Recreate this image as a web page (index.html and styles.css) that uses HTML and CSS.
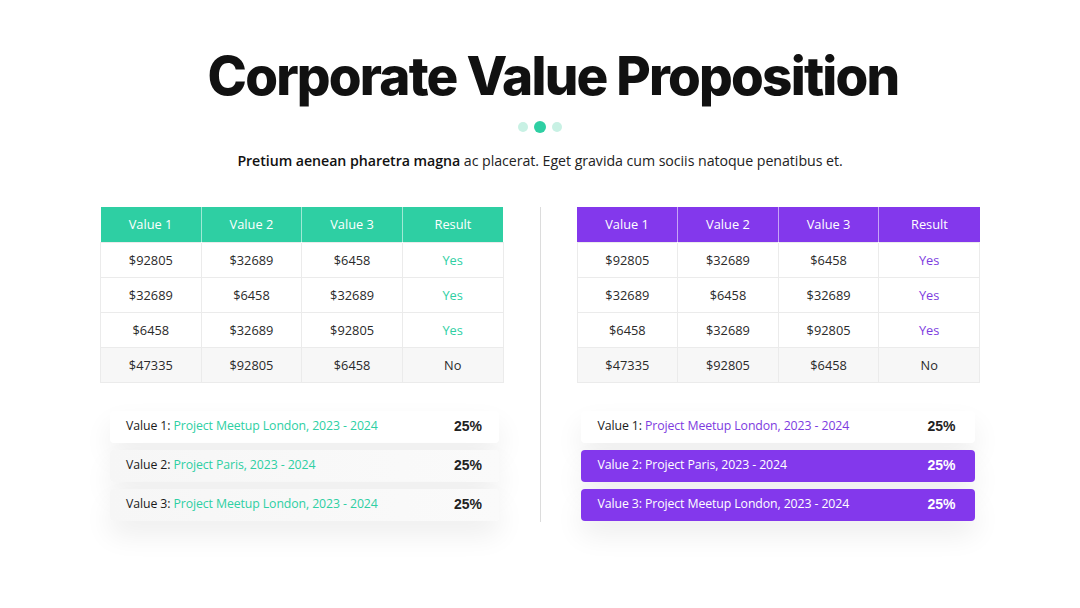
FILE: index.html
```html
<!DOCTYPE html>
<html>
<head>
<meta charset="utf-8">
<link rel="stylesheet" href="styles.css">
</head>
<body>
<div class="slide">
  <h1 class="title">Corporate Value Proposition</h1>
  <div class="dots"><span class="dot"></span><span class="dot active"></span><span class="dot"></span></div>
  <p class="subtitle"><strong>Pretium aenean pharetra magna</strong> ac placerat. Eget gravida cum sociis natoque penatibus et.</p>

  <div class="columns">
    <div class="col teal">
      <table class="data">
        <thead><tr><th>Value 1</th><th>Value 2</th><th>Value 3</th><th>Result</th></tr></thead>
        <tbody>
          <tr><td>$92805</td><td>$32689</td><td>$6458</td><td class="yes">Yes</td></tr>
          <tr><td>$32689</td><td>$6458</td><td>$32689</td><td class="yes">Yes</td></tr>
          <tr><td>$6458</td><td>$32689</td><td>$92805</td><td class="yes">Yes</td></tr>
          <tr class="last"><td>$47335</td><td>$92805</td><td>$6458</td><td>No</td></tr>
        </tbody>
      </table>
      <div class="bars bars-left">
        <div class="bar bar-white"><span class="label">Value 1: <span class="accent">Project Meetup London, 2023 - 2024</span></span><span class="pct">25%</span></div>
        <div class="bar bar-grey"><span class="label">Value 2: <span class="accent">Project Paris, 2023 - 2024</span></span><span class="pct">25%</span></div>
        <div class="bar bar-grey"><span class="label">Value 3: <span class="accent">Project Meetup London, 2023 - 2024</span></span><span class="pct">25%</span></div>
      </div>
    </div>
    <div class="divider"></div>
    <div class="col purple">
      <table class="data">
        <thead><tr><th>Value 1</th><th>Value 2</th><th>Value 3</th><th>Result</th></tr></thead>
        <tbody>
          <tr><td>$92805</td><td>$32689</td><td>$6458</td><td class="yes">Yes</td></tr>
          <tr><td>$32689</td><td>$6458</td><td>$32689</td><td class="yes">Yes</td></tr>
          <tr><td>$6458</td><td>$32689</td><td>$92805</td><td class="yes">Yes</td></tr>
          <tr class="last"><td>$47335</td><td>$92805</td><td>$6458</td><td>No</td></tr>
        </tbody>
      </table>
      <div class="bars bars-right">
        <div class="bar bar-white"><span class="label">Value 1: <span class="accent">Project Meetup London, 2023 - 2024</span></span><span class="pct">25%</span></div>
        <div class="bar bar-filled"><span class="label">Value 2: Project Paris, 2023 - 2024</span><span class="pct">25%</span></div>
        <div class="bar bar-filled"><span class="label">Value 3: Project Meetup London, 2023 - 2024</span><span class="pct">25%</span></div>
      </div>
    </div>
  </div>
</div>
</body>
</html>
```

FILE: styles.css
```css
* { box-sizing: border-box; }
html, body { margin: 0; padding: 0; background: #fff; }
body {
  width: 1080px;
  height: 608px;
  overflow: hidden;
  font-family: "Open Sans", "Noto Sans", sans-serif;
  color: #1f1f1f;
}
.slide {
  padding-top: 44px;
  display: flex;
  flex-direction: column;
  align-items: center;
}
.title {
  margin: 0 0 0 26px;
  font-family: Inter, "Liberation Sans", sans-serif;
  font-weight: 800;
  font-size: 53px;
  line-height: 64px;
  letter-spacing: -1.8px;
  color: #111;
}
.dots {
  display: flex;
  align-items: center;
  gap: 6px;
  margin-top: 13px;
  height: 12px;
}
.dot {
  width: 10px;
  height: 10px;
  border-radius: 50%;
  background: #c8f1e4;
}
.dot.active {
  width: 12px;
  height: 12px;
  background: #2ecfa3;
}
.subtitle {
  margin: 18px 0 0;
  font-size: 14.2px;
  line-height: 20px;
  color: #222;
  letter-spacing: -0.05px;
}
.subtitle strong { font-weight: 600; color: #111; }

.columns {
  margin-top: 36px;
  width: 880px;
  display: grid;
  grid-template-columns: 1fr 1px 1fr;
  column-gap: 36px;
}
.divider {
  background: #dcdcdc;
  height: 315px;
}
.data {
  width: 100%;
  border-collapse: collapse;
  table-layout: fixed;
  font-size: 12.8px;
}
.data th {
  height: 35px;
  font-weight: 400;
  color: #fff;
  border-left: 1px solid rgba(255,255,255,0.55);
  padding: 0;
}
.data th:first-child { border-left: none; }
.teal .data th { background: #2ecfa3; }
.purple .data th { background: #8338ec; }
.data td {
  height: 35px;
  text-align: center;
  border: 1px solid #ebebeb;
  color: #2a2a2a;
  padding: 0;
}
.data tr.last td { background: #f7f7f7; }
.teal .yes { color: #2ecfa3; }
.purple .yes { color: #7d3be0; }

.bars {
  margin-top: 28px;
  display: flex;
  flex-direction: column;
  gap: 7px;
}
.bars-left { margin-left: 10px; width: 389px; }
.bars-right { margin-left: 4px; width: 394px; }
.bar {
  height: 32px;
  border-radius: 4px;
  display: flex;
  align-items: center;
  justify-content: space-between;
  padding: 0 17px 2px 16px;
  font-size: 12.3px;
  letter-spacing: -0.1px;
  box-shadow: 0 14px 28px rgba(0,0,0,0.07);
}
.bars-right .bar { padding-left: 17px; padding-right: 19px; }
.bar-white { background: #fff; }
.bar-grey { background: linear-gradient(90deg, #f6f6f6, #fafafa); }
.bar-filled { background: #8338ec; color: #fff; }
.label { color: #1a1a1a; }
.bar-filled .label { color: #fff; }
.teal .accent { color: #2ecfa3; }
.purple .accent { color: #7d3be0; }
.pct {
  font-family: "Liberation Sans", Arial, sans-serif;
  font-weight: 700;
  font-size: 14px;
  color: #222;
  letter-spacing: 0;
}
.bar-filled .pct { color: #fff; }
```
